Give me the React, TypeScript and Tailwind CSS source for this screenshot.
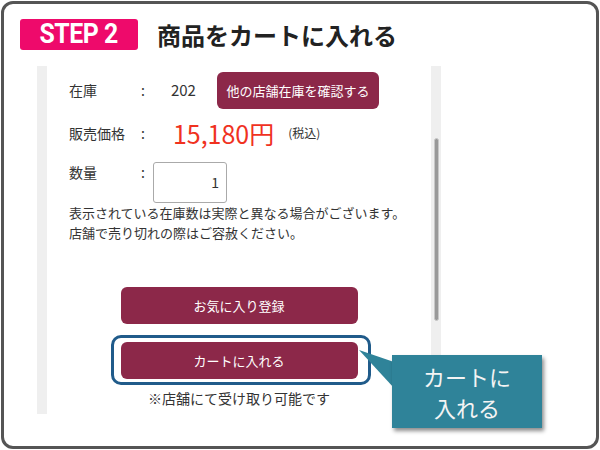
const jp = { fontFamily: '"Noto Sans CJK JP", "Noto Sans", sans-serif' }

function Row({ label, children, className = '' }: { label: string; children: React.ReactNode; className?: string }) {
  return (
    <div className={`flex ${className}`}>
      <span className="w-[72px] text-[14px] text-[#333]">{label}</span>
      <span className="text-[14px] text-[#333]">:</span>
      {children}
    </div>
  )
}

export default function App() {
  return (
    <div className="w-[600px] h-[450px] bg-white p-px" style={jp}>
      <div className="relative h-full border-[3px] border-[#555] rounded-[12px] bg-white">
        {/* header */}
        <div className="flex items-center pl-[16px] pt-[15px]">
          <div className="w-[118px] h-[31px] bg-[#ee0a6b] rounded-[3px] flex items-center justify-center">
            <span
              className="text-white text-[27px] font-bold leading-none tracking-[-0.5px] scale-x-[0.92]"
              style={{ fontFamily: 'Roboto, "Liberation Sans", sans-serif' }}
            >
              STEP 2
            </span>
          </div>
          <h1 className="ml-[19px] text-[24px] font-bold text-[#222] leading-none">商品をカートに入れる</h1>
        </div>

        {/* scroll panel */}
        <div className="flex ml-[33px] mt-[16px] w-[404px] h-[348px]">
          <div className="w-[10px] bg-[#efefef]" />
          <div className="flex-1 bg-white pt-[6px] pl-[22px] flex flex-col">
            <Row label="在庫" className="items-center">
              <span className="ml-[26px] text-[15px] text-[#333]">202</span>
              <button className="ml-[21px] w-[162px] h-[37px] rounded-[6px] bg-[#8c2849] text-white text-[13px]">
                他の店舗在庫を確認する
              </button>
            </Row>

            <Row label="販売価格" className="items-center mt-[9px] h-[30px]">
              <span className="ml-[28px] text-[25px] leading-none text-[#f0321f]">15,180円</span>
              <span className="ml-[14px] text-[12px] text-[#333]">(税込)</span>
            </Row>

            <Row label="数量" className="items-start mt-[14px]">
              <div className="ml-[8px] w-[74px] h-[41px] border border-[#aaa] rounded-[3px] flex items-center justify-end pr-[7px] text-[14px] text-[#333]">
                1
              </div>
            </Row>

            <p className="text-[13px] leading-[20px] text-[#333]">
              表示されている在庫数は実際と異なる場合がございます。
              <br />
              店舗で売り切れの際はご容赦ください。
            </p>

            <div className="flex flex-col items-center pr-[22px]">
              <button className="mt-[44px] w-[237px] h-[37px] rounded-[6px] bg-[#8c2849] text-white text-[13px]">
                お気に入り登録
              </button>
              <div className="relative mt-[18px]">
                <div className="absolute -left-[10px] -right-[13px] -top-[7px] -bottom-[6px] border-[3px] border-[#205b8a] rounded-[10px]" />
                <button className="relative w-[237px] h-[37px] rounded-[6px] bg-[#8c2849] text-white text-[13px]">
                  カートに入れる
                </button>
              </div>
              <p className="mt-[9px] text-[14px] leading-[20px] text-[#333]">※店舗にて受け取り可能です</p>
            </div>
          </div>
          <div className="w-[10px] bg-[#efefef] pt-[72px]">
            <div className="mx-auto w-[5px] h-[183px] rounded-full bg-[#999] border border-[#c8c8c8]" />
          </div>
        </div>

        {/* callout */}
        <svg className="absolute left-[350px] top-[340px]" width="45" height="50" viewBox="0 0 45 50">
          <polygon points="5,6 40,18 40,44" fill="#2f8399" />
        </svg>
        <div className="absolute left-[388px] top-[351px] w-[150px] h-[73px] bg-[#2f8399] shadow-[2px_3px_4px_rgba(0,0,0,0.45)] flex flex-col items-center justify-center text-[22px] leading-[31px] text-[#f4f4f4]">
          <p>カートに</p>
          <p>入れる</p>
        </div>
      </div>
    </div>
  )
}
